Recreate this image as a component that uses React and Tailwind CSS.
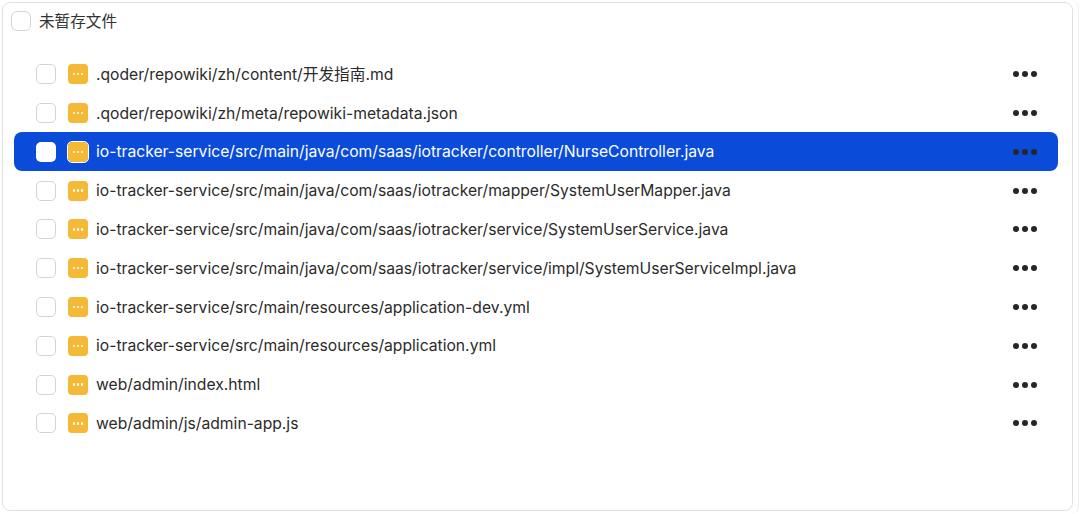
const files = [
  ".qoder/repowiki/zh/content/开发指南.md",
  ".qoder/repowiki/zh/meta/repowiki-metadata.json",
  "io-tracker-service/src/main/java/com/saas/iotracker/controller/NurseController.java",
  "io-tracker-service/src/main/java/com/saas/iotracker/mapper/SystemUserMapper.java",
  "io-tracker-service/src/main/java/com/saas/iotracker/service/SystemUserService.java",
  "io-tracker-service/src/main/java/com/saas/iotracker/service/impl/SystemUserServiceImpl.java",
  "io-tracker-service/src/main/resources/application-dev.yml",
  "io-tracker-service/src/main/resources/application.yml",
  "web/admin/index.html",
  "web/admin/js/admin-app.js",
];

function Row({ name, selected }) {
  return (
    <div className={`flex h-[38.8px] items-center rounded-[8px] pl-[22px] pr-[21px] ${selected ? "bg-[#0a4cd9] text-white" : "text-[#2b2b2b]"}`}>
      <span className={`h-[20px] w-[20px] shrink-0 rounded-[5px] ${selected ? "bg-white" : "border border-[#d4d4d4] bg-white"}`} />
      <span className={`ml-[12px] flex h-[20px] w-[20px] shrink-0 items-center justify-center gap-[1.5px] rounded-[4px] bg-[#f4b936] ${selected ? "outline outline-1 outline-white" : ""}`}>
        <span className="h-[2.5px] w-[2.5px] rounded-full bg-white" />
        <span className="h-[2.5px] w-[2.5px] rounded-full bg-white" />
        <span className="h-[2.5px] w-[2.5px] rounded-full bg-white" />
      </span>
      <span className="ml-[8px] flex-1 whitespace-nowrap pt-[1px] text-[15.68px] leading-none font-['Inter','Noto_Sans_CJK_SC',sans-serif]">{name}</span>
      <span className="flex items-center gap-[3px]">
        <span className="h-[6px] w-[6px] rounded-full bg-[#262626]" />
        <span className="h-[6px] w-[6px] rounded-full bg-[#262626]" />
        <span className="h-[6px] w-[6px] rounded-full bg-[#262626]" />
      </span>
    </div>
  );
}

export default function App() {
  return (
    <div className="h-[514px] w-[1079px] overflow-hidden rounded-[8px] border-r border-[#efefef] bg-white pl-[2px] pt-[2px]">
      <div className="h-[509px] w-[1071px] rounded-[8px] border border-[#e0e0e0] bg-white pl-[8px] pr-[14px] pt-[6px]">
        <div className="flex h-[24px] items-center">
          <span className="h-[20px] w-[20px] rounded-[6px] border border-[#d4d4d4] bg-white" />
          <span className="ml-[8px] text-[15.6px] leading-none text-[#333] font-['Noto_Sans_CJK_SC',sans-serif]">未暂存文件</span>
        </div>
        <div className="ml-[3px] mt-[21.8px]">
          {files.map((f, i) => (
            <Row key={f} name={f} selected={i === 2} />
          ))}
        </div>
      </div>
    </div>
  );
}
